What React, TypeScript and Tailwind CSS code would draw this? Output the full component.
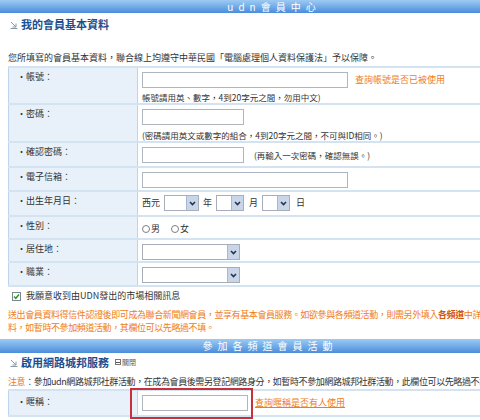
import React from 'react';

const Select = ({ w }: { w: string }) => (
    <div className={`flex h-[16px] ${w} border border-[#a7aeb8] bg-white`}>
        <div className="flex-1" />
        <div className="w-[12px] bg-[#c9d5e8] border-l border-[#a9b8d2] flex items-center justify-center">
            <svg width="7" height="5" viewBox="0 0 7 5">
                <path d="M1 1l2.5 2.5L6 1" stroke="#27324d" strokeWidth="1.6" fill="none" />
            </svg>
        </div>
    </div>
);

const Input = ({ w }: { w: string }) => (
    <div className={`h-[16px] ${w} border border-[#aeb6c0] bg-white`} />
);

const Radio = ({ label }: { label: string }) => (
    <span className="flex items-center gap-[1px]">
        <span className="w-[8px] h-[8px] rounded-full border border-[#7a7f88] bg-white" />
        <span>{label}</span>
    </span>
);

const CornerArrow = () => (
    <svg width="8" height="8" viewBox="0 0 8 8" className="mt-[2px]">
        <path d="M1 1l5 5M6 2.5V6H2.5" stroke="#8a98a8" strokeWidth="1" fill="none" />
        <path d="M0.5 7.5h7" stroke="#8a98a8" strokeWidth="1" />
    </svg>
);

const Row = ({ label, h, children }: { label: string; h: string; children?: React.ReactNode }) => (
    <div className={`grid grid-cols-[130px_1fr] ${h} border-b-2 border-[#d3e3f1]`}>
        <div className="bg-[#e8f1fa] border-l border-r border-[#bed4ea] pl-[8px] pt-[3px]">‧{label}：</div>
        <div className="bg-white pl-[4px] pt-[4px]">{children}</div>
    </div>
);

const App = () => {
    return (
        <div className="w-[480px] h-[420px] overflow-hidden bg-white">
            <div className="w-[540px] text-[9px] leading-[12px] text-[#333] font-['Noto_Sans_CJK_TC','Liberation_Sans',sans-serif]">
                {/* top bar */}
                <div className="h-[13px] bg-linear-to-b from-[#9ccbf3] to-[#4a8ddb] flex items-center justify-center">
                    <span className="text-white text-[10px] leading-[13px] tracking-[5px] pl-[8px]">udn會員中心</span>
                </div>

                <div className="flex items-center gap-[3px] pl-[10px] mt-[4px] h-[14px]">
                    <CornerArrow />
                    <span className="text-[11px] font-bold text-[#1d4e8f]">我的會員基本資料</span>
                </div>

                <p className="mt-[21px] pl-[8px] h-[14px]">您所填寫的會員基本資料，聯合線上均遵守中華民國「電腦處理個人資料保護法」予以保障。</p>

                {/* form table */}
                <div className="ml-[8px] w-[524px] border-t-2 border-[#d3e3f1]">
                    <Row label="帳號" h="h-[37px]">
                        <div className="flex items-center gap-[7px]">
                            <Input w="w-[206px]" />
                            <span className="text-[#ef7d18]">查詢帳號是否已被使用</span>
                        </div>
                        <div className="mt-[3px] text-[8.5px]">帳號請用英、數字，4到20字元之間，勿用中文)</div>
                    </Row>
                    <Row label="密碼" h="h-[38px]">
                        <Input w="w-[102px]" />
                        <div className="mt-[4px] text-[8.5px]">(密碼請用英文或數字的組合，4到20字元之間，不可與ID相同。)</div>
                    </Row>
                    <Row label="確認密碼" h="h-[25px]">
                        <div className="flex items-center gap-[10px]">
                            <Input w="w-[102px]" />
                            <span className="text-[8.5px]">(再輸入一次密碼，確認無誤。)</span>
                        </div>
                    </Row>
                    <Row label="電子信箱" h="h-[24px]">
                        <Input w="w-[206px]" />
                    </Row>
                    <Row label="出生年月日" h="h-[25px]">
                        <div className="flex items-center gap-[4px] mt-[-1px]">
                            <span>西元</span>
                            <Select w="w-[35px]" />
                            <span>年</span>
                            <Select w="w-[28px]" />
                            <span className="ml-[1px]">月</span>
                            <Select w="w-[28px]" />
                            <span className="ml-[2px]">日</span>
                        </div>
                    </Row>
                    <Row label="性別" h="h-[23px]">
                        <div className="flex items-center gap-[11px] pt-[2px]">
                            <Radio label="男" />
                            <Radio label="女" />
                        </div>
                    </Row>
                    <Row label="居住地" h="h-[23px]">
                        <Select w="w-[98px]" />
                    </Row>
                    <Row label="職業" h="h-[24px]">
                        <Select w="w-[98px]" />
                    </Row>
                </div>

                <div className="flex items-center gap-[5px] pl-[12px] mt-[3px] h-[12px]">
                    <span className="w-[9px] h-[9px] border border-[#7c8590] bg-white flex items-center justify-center">
                        <svg width="7" height="7" viewBox="0 0 7 7">
                            <path d="M1 3.5l1.8 1.8L6 1.5" stroke="#2f9a2a" strokeWidth="1.5" fill="none" />
                        </svg>
                    </span>
                    <span>我願意收到由UDN發出的市場相關訊息</span>
                </div>

                <div className="mt-[6px] pl-[8px] text-[#ef7d18] leading-[13px] tracking-[-0.4px] whitespace-nowrap">
                    送出會員資料得信件認證後即可成為聯合新聞網會員，並享有基本會員服務。如欲參與各頻道活動，則需另外填入<b className="text-[#d2560a]">各頻道</b>中詳細資<br />
                    料，如暫時不參加頻道活動，其欄位可以先略過不填。
                </div>

                {/* second bar */}
                <div className="mt-[5px] h-[14px] bg-linear-to-b from-[#9ccbf3] to-[#4a8ddb] flex items-center justify-center">
                    <span className="text-white text-[10px] leading-[14px] tracking-[5px]">參加各頻道會員活動</span>
                </div>

                <div className="flex items-center gap-[3px] pl-[10px] mt-[2px] h-[14px]">
                    <CornerArrow />
                    <span className="text-[11px] font-bold text-[#1d4e8f]">啟用網路城邦服務</span>
                    <span className="ml-[3px] flex items-center gap-[1px] text-[7px] text-[#555]">
                        <span className="w-[6px] h-[6px] border border-[#777] flex items-center justify-center">
                            <span className="w-[4px] h-[1px] bg-[#555]" />
                        </span>
                        關閉
                    </span>
                </div>

                <p className="mt-[7px] pl-[8px] tracking-[-0.4px] whitespace-nowrap">
                    <span className="text-[#ef7d18]">注意</span>：參加udn網路城邦社群活動，在成為會員後需另登記網路身分，如暫時不參加網路城邦社群活動，此欄位可以先略過不填。
                </p>

                <div className="relative ml-[8px] mt-[1px] w-[524px] border-t-2 border-[#d3e3f1]">
                    <div className="grid grid-cols-[130px_1fr] h-[26px] border-b-2 border-[#d3e3f1]">
                        <div className="bg-[#e8f1fa] border-l border-r border-[#bed4ea] pl-[8px] pt-[5px]">‧暱稱：</div>
                        <div className="bg-white pl-[4px] pt-[4px] flex items-start gap-[7px]">
                            <Input w="w-[106px]" />
                            <span className="text-[#ef7d18] underline mt-[2px]">查詢暱稱是否有人使用</span>
                        </div>
                    </div>
                    <div className="absolute left-[122px] top-[-3px] w-[123px] h-[31px] border-2 border-[#c8303c]" />
                </div>
            </div>
        </div>
    );
};

export default App;
